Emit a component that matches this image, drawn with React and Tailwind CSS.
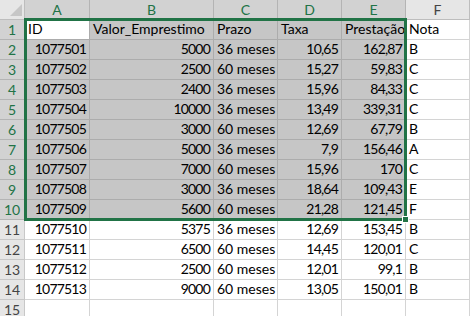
import React from 'react'

const cols = ['A', 'B', 'C', 'D', 'E', 'F'];

const linhas = [
  ['ID', 'Valor_Emprestimo', 'Prazo', 'Taxa', 'Prestação', 'Nota'],
  ['1077501', '5000', '36 meses', '10,65', '162,87', 'B'],
  ['1077502', '2500', '60 meses', '15,27', '59,83', 'C'],
  ['1077503', '2400', '36 meses', '15,96', '84,33', 'C'],
  ['1077504', '10000', '36 meses', '13,49', '339,31', 'C'],
  ['1077505', '3000', '60 meses', '12,69', '67,79', 'B'],
  ['1077506', '5000', '36 meses', '7,9', '156,46', 'A'],
  ['1077507', '7000', '60 meses', '15,96', '170', 'C'],
  ['1077508', '3000', '36 meses', '18,64', '109,43', 'E'],
  ['1077509', '5600', '60 meses', '21,28', '121,45', 'F'],
  ['1077510', '5375', '36 meses', '12,69', '153,45', 'B'],
  ['1077511', '6500', '60 meses', '14,45', '120,01', 'C'],
  ['1077512', '2500', '60 meses', '12,01', '99,1', 'B'],
  ['1077513', '9000', '60 meses', '13,05', '150,01', 'B'],
  ['', '', '', '', '', ''],
];

const Celula = ({ valor, linha, col }) => {
  const selecionada = linha < 10 && col < 5;
  const ativa = linha === 0 && col === 0;
  // numeros ficam a direita, texto a esquerda (igual ao Excel)
  const numero = linha > 0 && col !== 2 && col !== 5;

  let cls = 'h-[20px] border-r border-b px-[3px] flex items-end pb-[1px] whitespace-nowrap overflow-hidden text-black ';
  if (ativa) cls += 'bg-white border-[#acacac] ';
  else if (selecionada) cls += 'bg-[#c6c6c6] border-[#acacac] ';
  else cls += 'bg-white border-[#d4d4d4] ';
  cls += numero ? 'justify-end tracking-[-0.8px]' : 'justify-start';

  return <div className={cls}>{valor}</div>;
};

const App = () => {
  return (
    <div className="relative w-[470px] h-[316px] overflow-hidden bg-white font-['Lato','Liberation_Sans',sans-serif] text-[14px] leading-[18px]">
      <div className="grid grid-cols-[25px_65px_124px_64px_64px_64px_64px]">
        {/* canto superior esquerdo */}
        <div className="h-[20px] bg-[#e6e6e6] border-r border-b border-[#bdbdbd] relative">
          <svg width="24" height="19" className="absolute left-0 top-0">
            <polygon points="22,4 22,16 10,16" fill="#c6c6c6" />
          </svg>
        </div>
        {cols.map((c, i) => (
          <div
            key={c}
            className={
              i < 5
                ? 'h-[20px] bg-[#d2d2d2] border-r border-b border-[#b4b4b4] flex items-center justify-center text-[#217346]'
                : 'h-[20px] bg-[#e6e6e6] border-r border-b border-[#bdbdbd] flex items-center justify-center text-[#444444]'
            }
          >
            {c}
          </div>
        ))}

        {linhas.map((linha, r) => (
          <React.Fragment key={r}>
            <div
              className={
                r < 10
                  ? 'h-[20px] bg-[#d2d2d2] border-r border-b border-[#b4b4b4] flex items-center justify-center text-[#217346]'
                  : 'h-[20px] bg-[#e6e6e6] border-r border-b border-[#c8c8c8] flex items-center justify-center text-[#444444]'
              }
            >
              {r + 1}
            </div>
            {linha.map((v, c) => (
              <Celula key={c} valor={v} linha={r} col={c} />
            ))}
          </React.Fragment>
        ))}
      </div>

      {/* borda da selecao A1:E10 */}
      <div className="absolute left-[24px] top-[18px] w-[383px] h-[203px] border-[3px] border-[#217346] pointer-events-none"></div>
      <div className="absolute left-[402px] top-[216px] w-[7px] h-[7px] bg-[#217346] border border-white"></div>
    </div>
  );
};

export default App
